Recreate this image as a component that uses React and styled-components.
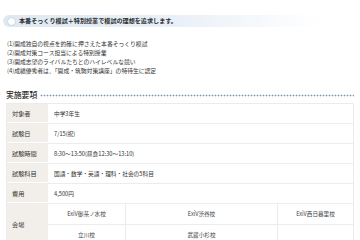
import React from "react";
import styled, { createGlobalStyle } from "styled-components";

const Global = createGlobalStyle`
  html, body { margin: 0; padding: 0; background: #ffffff; }
  body { font-family: "Noto Sans CJK JP", "Noto Sans", sans-serif; color: #333; }
  * { box-sizing: border-box; }
`;

const Page = styled.div`
  width: 360px;
  height: 240px;
  overflow: hidden;
  padding: 15px 6px 0 6px;
`;

const LeadBar = styled.div`
  display: flex;
  align-items: center;
  gap: 3px;
  height: 12px;
  margin-left: -3px;
  width: 320px;
  padding-left: 4px;
  border-radius: 6px 0 0 6px;
  background: linear-gradient(to right, #dfe9f3 0%, #e9f0f7 55%, #f6f9fc 80%, #ffffff 100%);
`;

const Dot = styled.span`
  width: 9px;
  height: 9px;
  border-radius: 50%;
  background: #ffffff;
  border: 1px solid #c9d6e3;
  flex: none;
`;

const LeadText = styled.span`
  font-size: 6.1px;
  line-height: 12px;
  font-weight: 700;
  color: #2b2b2b;
  white-space: nowrap;
`;

const FeatureList = styled.ul`
  list-style: none;
  margin: 12px 0 0 1px;
  padding: 0;
`;

const FeatureItem = styled.li`
  font-size: 5.8px;
  line-height: 9.1px;
  color: #333;
  white-space: nowrap;
`;

const SectionHead = styled.div`
  display: flex;
  align-items: center;
  gap: 3px;
  margin-top: 15px;
  height: 10px;
`;

const SectionTitle = styled.span`
  font-size: 7.8px;
  line-height: 10px;
  font-weight: 500;
  color: #2b2b2b;
  white-space: nowrap;
`;

const DottedRule = styled.span`
  flex: 1;
  height: 3px;
  background-image: radial-gradient(circle, #7f9ab4 0.8px, transparent 1.1px);
  background-size: 3px 3px;
  background-repeat: repeat-x;
`;

const Table = styled.div`
  margin-top: 3px;
  border: 1px solid #ebebeb;
  border-bottom: none;
  width: 348px;
`;

const Row = styled.div`
  display: grid;
  grid-template-columns: 41px 1fr;
  min-height: ${(p) => p.$h || 20}px;
  border-bottom: 1px solid #ececec;
`;

const Label = styled.div`
  background: #f2efea;
  border-bottom: 1px solid #ffffff;
  display: flex;
  align-items: center;
  padding-left: 5px;
  font-size: 6.2px;
  color: #333;
  white-space: nowrap;
`;

const Value = styled.div`
  display: flex;
  align-items: center;
  padding-left: 6px;
  font-size: 5.7px;
  color: #333;
  white-space: nowrap;
`;

const VenueGrid = styled.div`
  display: grid;
  grid-template-columns: 78px 152px 1fr;
  grid-auto-rows: 21px;
`;

const VenueCell = styled.div`
  display: flex;
  align-items: center;
  justify-content: center;
  font-size: 5.6px;
  color: #444;
  white-space: nowrap;
  border-right: ${(p) => (p.$last ? "none" : "1px solid #ececec")};
  border-bottom: 1px solid #ececec;
`;

const features = [
  "(1)開成独自の視点を的確に押さえた本番そっくり模試",
  "(2)開成対策コース担当による特別授業",
  "(3)開成志望のライバルたちとのハイレベルな競い",
  "(4)成績優秀者は、「開成・筑駒対策講座」の特待生に認定",
];

const rows = [
  ["対象者", "中学3年生"],
  ["試験日", "7/15(祝)"],
  ["試験時間", "8:30〜13:50(昼食12:30〜13:10)"],
  ["試験科目", "国語・数学・英語・理科・社会の5科目"],
  ["費用", "4,500円"],
];

const venues = [
  "ExiV御茶ノ水校",
  "ExiV渋谷校",
  "ExiV西日暮里校",
  "立川校",
  "武蔵小杉校",
  "",
];

export default function App() {
  return (
    <>
      <Global />
      <Page>
        <LeadBar>
          <Dot />
          <LeadText>本番そっくり模試＋特別授業で模試の理想を追求します。</LeadText>
        </LeadBar>
        <FeatureList>
          {features.map((f) => (
            <FeatureItem key={f}>{f}</FeatureItem>
          ))}
        </FeatureList>
        <SectionHead>
          <SectionTitle>実施要項</SectionTitle>
          <DottedRule />
        </SectionHead>
        <Table>
          {rows.map(([l, v]) => (
            <Row key={l}>
              <Label>{l}</Label>
              <Value>{v}</Value>
            </Row>
          ))}
          <Row $h={42}>
            <Label>会場</Label>
            <VenueGrid>
              {venues.map((v, i) => (
                <VenueCell key={i} $last={i % 3 === 2}>
                  {v}
                </VenueCell>
              ))}
            </VenueGrid>
          </Row>
        </Table>
      </Page>
    </>
  );
}
